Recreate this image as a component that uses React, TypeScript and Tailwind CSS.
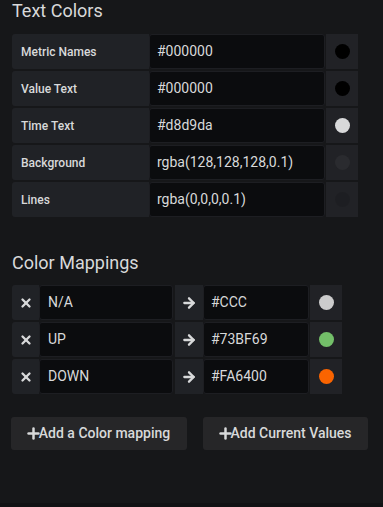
import React from "react";
import { X, ArrowRight, Plus } from "lucide-react";

const textRows = [
  { label: "Metric Names", value: "#000000", color: "#000000" },
  { label: "Value Text", value: "#000000", color: "#000000" },
  { label: "Time Text", value: "#d8d9da", color: "#d8d9da" },
  { label: "Background", value: "rgba(128,128,128,0.1)", color: "rgba(128,128,128,0.1)" },
  { label: "Lines", value: "rgba(0,0,0,0.1)", color: "rgba(0,0,0,0.1)" },
];

const mappings = [
  { key: "N/A", value: "#CCC", color: "#CCCCCC" },
  { key: "UP", value: "#73BF69", color: "#73BF69" },
  { key: "DOWN", value: "#FA6400", color: "#FA6400" },
];

export default function App() {
  return (
    <div className="w-[383px] h-[507px] bg-[#161719] font-['Roboto',sans-serif] text-[#d8d9da] flex flex-col">
      <div className="flex-1 px-3">
        <h5 className="text-[18px] leading-[22px] font-normal">Text Colors</h5>
        <div className="mt-3 flex flex-col gap-[2px]">
          {textRows.map((r) => (
            <div key={r.label} className="flex h-[35px]">
              <div className="w-[137px] bg-[#202226] rounded-l-[3px] pl-[9px] flex items-center text-[12px] font-medium">
                {r.label}
              </div>
              <div className="w-[176px] bg-[#0b0c0e] border border-[#1d1e22] rounded-[3px] pl-[7px] flex items-center text-[14px]">
                {r.value}
              </div>
              <div className="ml-[1px] w-[32px] bg-[#212226] flex items-center justify-center">
                <span className="w-[15px] h-[15px] rounded-full" style={{ backgroundColor: r.color }} />
              </div>
            </div>
          ))}
        </div>

        <h5 className="mt-[35px] text-[18px] leading-[22px] font-normal">Color Mappings</h5>
        <div className="mt-[11px] flex flex-col gap-[2px]">
          {mappings.map((m) => (
            <div key={m.key} className="flex h-[35px]">
              <div className="w-[27px] bg-[#202226] rounded-l-[3px] flex items-center justify-center">
                <X size={14} strokeWidth={4} color="#d8d9da" />
              </div>
              <div className="w-[134px] bg-[#0b0c0e] border border-[#1d1e22] rounded-[3px] pl-[8px] flex items-center text-[14px]">
                {m.key}
              </div>
              <div className="ml-[2px] w-[28px] bg-[#202226] flex items-center justify-center">
                <ArrowRight size={16} strokeWidth={3.5} color="#d8d9da" />
              </div>
              <div className="w-[106px] bg-[#0b0c0e] border border-[#1d1e22] rounded-[3px] pl-[7px] flex items-center text-[14px]">
                {m.value}
              </div>
              <div className="ml-[1px] w-[32px] bg-[#212226] flex items-center justify-center">
                <span className="w-[15px] h-[15px] rounded-full" style={{ backgroundColor: m.color }} />
              </div>
            </div>
          ))}
        </div>

        <div className="mt-[23px] flex">
          <button className="ml-[-1px] w-[176px] h-[33px] bg-[#262628] rounded-[3px] flex items-center justify-center text-[14px] font-medium text-[#d8d9da]">
            <Plus size={17} strokeWidth={3.5} className="-ml-[3px] -mr-[3px]" />
            <span>Add a Color mapping</span>
          </button>
          <button className="ml-[16px] w-[165px] h-[33px] bg-[#262628] rounded-[3px] flex items-center justify-center text-[14px] font-medium text-[#d8d9da]">
            <Plus size={17} strokeWidth={3.5} className="-ml-[3px] -mr-[3px]" />
            <span>Add Current Values</span>
          </button>
        </div>
      </div>
      <div className="h-[4px] bg-[#111214]" />
    </div>
  );
}
